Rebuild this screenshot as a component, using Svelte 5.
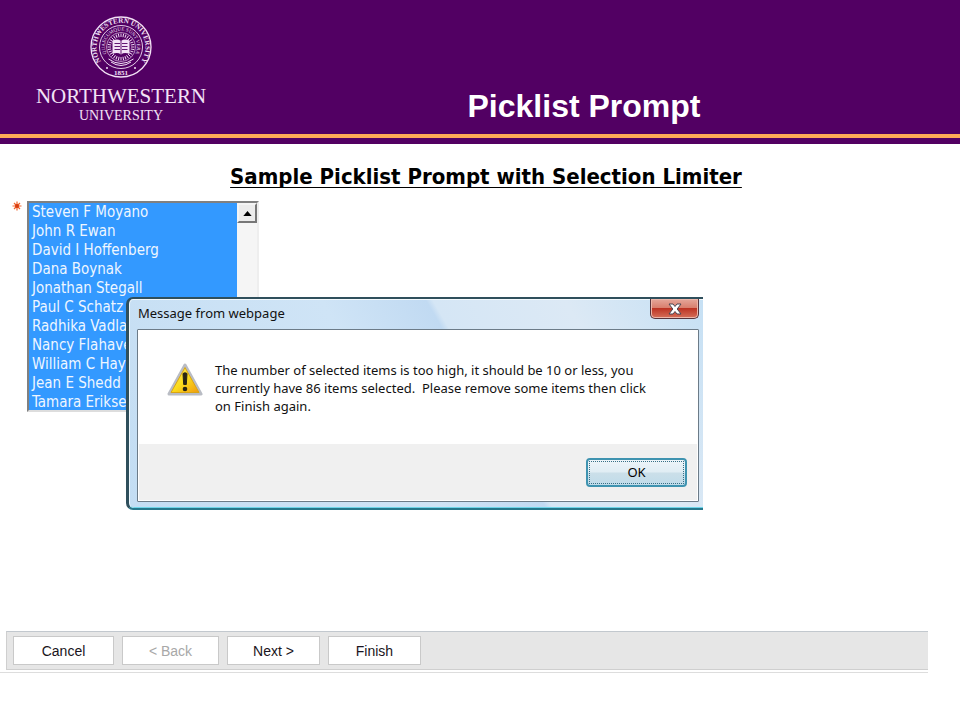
<script lang="ts">
	const people = [
		'Steven F Moyano',
		'John R Ewan',
		'David I Hoffenberg',
		'Dana Boynak',
		'Jonathan Stegall',
		'Paul C Schatz',
		'Radhika Vadla',
		'Nancy Flahave',
		'William C Hay',
		'Jean E Shedd',
		'Tamara Erikse',
	];

	// angles of the rays around the book in the seal
	const rays = Array.from({ length: 32 }, (_, i) => i * 11.25);

	let selected = $state([...people]);
	let dialogOpen = $state(true);
	let list: HTMLSelectElement;
</script>

<div class="page">
	<header>
		<div class="logo">
			<svg class="seal" viewBox="0 0 62 62" aria-hidden="true">
				<defs>
					<path id="ring-top" d="M13.5 48.5 A24.500 24.500 0 1 1 48.500 48.500" />
					<path id="motto" d="M18.500 40.500 A16 16 0 1 1 43.500 40.500" />
				</defs>
				<g fill="none" stroke="currentColor">
					<circle cx="31" cy="31" r="30" stroke-width="1.3" />
					<circle cx="31" cy="31" r="21.500" stroke-width=".9" />
					<circle cx="31" cy="31" r="14.500" stroke-width=".6" />
					{#each rays as angle}
						<path d="M31 21V17.500" stroke-width=".9" transform="rotate({angle} 31 31)" />
					{/each}
					<path d="M18.500 43Q31 52 43.500 43M21 46Q31 53 41 46" stroke-width="1" />
				</g>
				<path
					d="M22.500 24.500Q27.500 22.500 31 25Q34.500 22.500 39.500 24.500V38Q34.500 36 31 38.500Q27.500 36 22.500 38Z"
					fill="currentColor"
				/>
				<path
					d="M24.500 27.500H30M24.500 30.500H30M24.500 33.500H30M32 27.500H37.500M32 30.500H37.500M32 33.500H37.500M31 25V38"
					stroke="#520063"
					stroke-width=".9"
				/>
				<circle cx="17" cy="52" r="1" fill="currentColor" />
				<circle cx="45" cy="52" r="1" fill="currentColor" />
				<text class="ring" text-anchor="middle">
					<textPath href="#ring-top" startOffset="50%">NORTHWESTERN UNIVERSITY</textPath>
				</text>
				<text class="motto" text-anchor="middle">
					<textPath href="#motto" startOffset="50%">QUAECUMQUE SUNT VERA</textPath>
				</text>
				<text class="year" x="31" y="59" text-anchor="middle">1851</text>
			</svg>
			<span class="name">NORTHWESTERN</span>
			<span class="sub">UNIVERSITY</span>
		</div>
		<h1>Picklist Prompt</h1>
	</header>

	<main>
		<h2>Sample Picklist Prompt with Selection Limiter</h2>

		<div class="prompt">
			<svg class="required" viewBox="0 0 10 10" aria-hidden="true">
				<path d="M5 .5V9.5M.5 5H9.5M2 2L8 8M8 2L2 8" stroke="#f0642c" stroke-width="1.2" />
				<circle cx="5" cy="5" r="2" fill="#d93d10" />
			</svg>
			<div class="listbox">
				<select
					multiple
					size="11"
					aria-label="People"
					bind:this={list}
					bind:value={selected}
				>
					{#each people as person}
						<option value={person}>{person}</option>
					{/each}
				</select>
				<div class="track">
					<button
						aria-label="Scroll up"
						onclick={() => list.scrollBy(0, -19)}
					>
						<svg viewBox="0 0 10 6"><path d="M5 0L10 6H0Z" /></svg>
					</button>
				</div>
			</div>

			{#if dialogOpen}
				<div class="dialog" role="alertdialog" aria-labelledby="dialog-title">
					<div class="titlebar">
						<span id="dialog-title">Message from webpage</span>
						<button class="close" aria-label="Close" onclick={() => (dialogOpen = false)}>
							<svg viewBox="0 0 14 12">
								<path
									d="M1 1H5L7 3.5L9 1H13L9.2 6L13 11H9L7 8.5L5 11H1L4.8 6Z"
									fill="#fff"
									stroke="#4b4550"
								/>
							</svg>
						</button>
					</div>
					<div class="client">
						<div class="message">
							<svg viewBox="0 0 36 33" aria-hidden="true">
								<defs>
									<linearGradient id="warn" x1="0" y1="0" x2="1" y2="1">
										<stop offset="0" stop-color="#ffe96a" />
										<stop offset=".5" stop-color="#fbdc1c" />
										<stop offset="1" stop-color="#f09a10" />
									</linearGradient>
								</defs>
								<path
									d="M18 2L34 31H2Z"
									fill="#b9bcc4"
									stroke="#b9bcc4"
									stroke-width="3"
									stroke-linejoin="round"
								/>
								<path
									d="M18 4.500L32 29.500H4Z"
									fill="url(#warn)"
									stroke="#d9a514"
									stroke-linejoin="round"
								/>
								<path d="M16 10.500Q18 9 20 10.500L19.300 21.500H16.700Z" fill="#292414" stroke="#292414" />
								<circle cx="18" cy="26" r="2.300" fill="#292414" />
							</svg>
							<p>
								The number of selected items is too high, it should be 10 or less, you<br />
								currently have 86 items selected.&nbsp; Please remove some items then click<br />
								on Finish again.
							</p>
						</div>
						<div class="actions">
							<button onclick={() => (dialogOpen = false)}><span>OK</span></button>
						</div>
					</div>
				</div>
			{/if}
		</div>
	</main>

	<footer>
		<nav>
			<button class="cancel">Cancel</button>
			<button class="back" disabled>&lt; Back</button>
			<button>Next &gt;</button>
			<button>Finish</button>
		</nav>
	</footer>
</div>

<style>
	:global(body) {
		background: #fff;
	}

	.page {
		display: flex;
		flex-direction: column;
		box-sizing: border-box;
		min-height: 100vh;
		padding-bottom: 47px;
		font-family: 'Liberation Sans', Arial, sans-serif;
	}

	button {
		padding: 0;
		font: inherit;
	}

	header {
		display: flex;
		align-items: flex-end;
		padding: 16px 0 14px 34px;
		border-bottom: 6px solid #520063;
		background: linear-gradient(#ffab57, #ffab57) 0 100% / 100% 4px no-repeat #520063;
		color: #fff;
	}

	.logo {
		display: flex;
		flex-direction: column;
		align-items: center;
		width: 174px;
		color: #f3e2f6;
		font-family: 'Liberation Serif', serif;
	}

	.seal {
		width: 62px;
		height: 62px;
		margin-bottom: 6px;
	}

	.ring {
		font-size: 7px;
		font-weight: bold;
	}

	.motto {
		font-size: 5px;
	}

	.year {
		font-size: 7px;
		font-weight: bold;
	}

	.seal text {
		fill: currentColor;
	}

	.name {
		font-size: 21px;
		line-height: 24px;
	}

	.sub {
		font-size: 14px;
		line-height: 16px;
	}

	h1 {
		flex: 1;
		margin: 0;
		font-size: 32px;
		line-height: 36px;
		text-align: center;
	}

	main {
		flex: 1;
	}

	h2 {
		margin: 20px 0 11px 12px;
		font: bold 22px/26px 'DejaVu Sans Condensed', Tahoma, sans-serif;
		text-align: center;
		text-decoration: underline;
		text-decoration-thickness: 1px;
		text-decoration-skip-ink: none;
		text-underline-offset: 3px;
	}

	.prompt {
		position: relative;
		display: flex;
		align-items: flex-start;
		gap: 5px;
		padding-left: 12px;
	}

	.required {
		width: 10px;
		height: 10px;
	}

	.listbox {
		display: flex;
		width: 232px;
		box-sizing: border-box;
		border: 2px solid #808080;
		border-right-color: #eee;
		border-bottom-color: #ddd;
	}

	select {
		flex: 1;
		min-width: 0;
		height: 207px;
		padding: 0;
		border: 0;
		border-radius: 0;
		outline: 0;
		background: #3399ff;
		font: 15px 'DejaVu Sans Condensed', Tahoma, sans-serif;
		scrollbar-width: none;
	}

	option {
		box-sizing: border-box;
		height: 19px;
		min-height: 0;
		padding: 0 3px;
		color: #eef6ff;
	}

	option:checked {
		background: linear-gradient(#3399ff, #3399ff);
		-webkit-text-fill-color: #eef6ff;
	}

	.track {
		width: 20px;
		background: #f5f5f5;
	}

	.track button {
		display: flex;
		align-items: center;
		justify-content: center;
		width: 20px;
		height: 20px;
		border: 2px solid #f4f4f4;
		border-right-color: #777;
		border-bottom-color: #777;
		background: #ececec;
	}

	.track svg {
		width: 9px;
		height: 5px;
	}

	.dialog {
		position: absolute;
		top: 96px;
		left: 126px;
		box-sizing: border-box;
		width: 577px;
		padding: 0 4px 6px 8px;
		border: solid #2f4f5c;
		border-width: 2px 0 2px 3px;
		border-radius: 7px 0 0 7px;
		border-bottom-color: #26788c;
		background: linear-gradient(
			60deg,
			#c3ddf3 0,
			#cfe4f6 45%,
			#c1daf2 60%,
			#d5e6f5 61%,
			#dce9f5 80%,
			#c6e0f4 100%
		);
		box-shadow: inset 1px 0 #eef8fe, inset 0 1px #f3f9fd, inset 0 -1px #6fd4e8;
		font: 13px/18px 'Noto Sans', 'Segoe UI', sans-serif;
		color: #111;
	}

	.titlebar {
		display: flex;
		align-items: flex-start;
		justify-content: space-between;
		height: 30px;
	}

	.titlebar span {
		padding: 5px 1px;
	}

	.close {
		display: flex;
		align-items: center;
		justify-content: center;
		width: 49px;
		height: 20px;
		border: 1px solid #57343c;
		border-top: 0;
		border-radius: 0 0 5px 5px;
		background: linear-gradient(#e5a79b 0, #d9806f 45%, #bd3424 50%, #d5705a 100%);
		box-shadow: inset 0 0 0 1px #edb7aa;
	}

	.close svg {
		width: 14px;
		height: 12px;
	}

	.client {
		border: 1px solid #6c7b88;
		border-radius: 1px;
		padding: 0 1px 1px;
		background: #fff;
	}

	.message {
		display: flex;
		gap: 12px;
		padding: 31px 0 29px 28px;
	}

	.message svg {
		flex: none;
		width: 36px;
		height: 33px;
		margin-top: 2px;
	}

	.message p {
		margin: 0;
		white-space: nowrap;
	}

	.actions {
		display: flex;
		justify-content: flex-end;
		padding: 14px 10px 13px;
		background: #f0f0f0;
	}

	.actions button {
		width: 101px;
		height: 29px;
		padding: 1px;
		border: 2px solid #3f93b0;
		border-radius: 4px;
		background: linear-gradient(#eef5f9 0, #e0edf4 48%, #cbdfe9 52%, #c0dcea 100%);
	}

	.actions span {
		display: block;
		border: 1px dotted #376f86;
		line-height: 21px;
	}

	footer {
		margin-right: 32px;
		padding: 0 0 2px 6px;
		border-bottom: 1px solid #ddd;
	}

	nav {
		display: flex;
		gap: 8px;
		padding: 4px 6px;
		border: 1px solid #cfcfcf;
		border-top-color: #c2c8ce;
		border-right: 0;
		background: #e6e6e6;
	}

	nav button {
		width: 93px;
		height: 29px;
		border: 1px solid #c9c9c9;
		background: #fff;
		font-size: 14px;
		color: #1a1420;
	}

	nav .cancel {
		width: 101px;
	}

	nav .back {
		width: 97px;
		color: #a8a8a8;
	}
</style>
